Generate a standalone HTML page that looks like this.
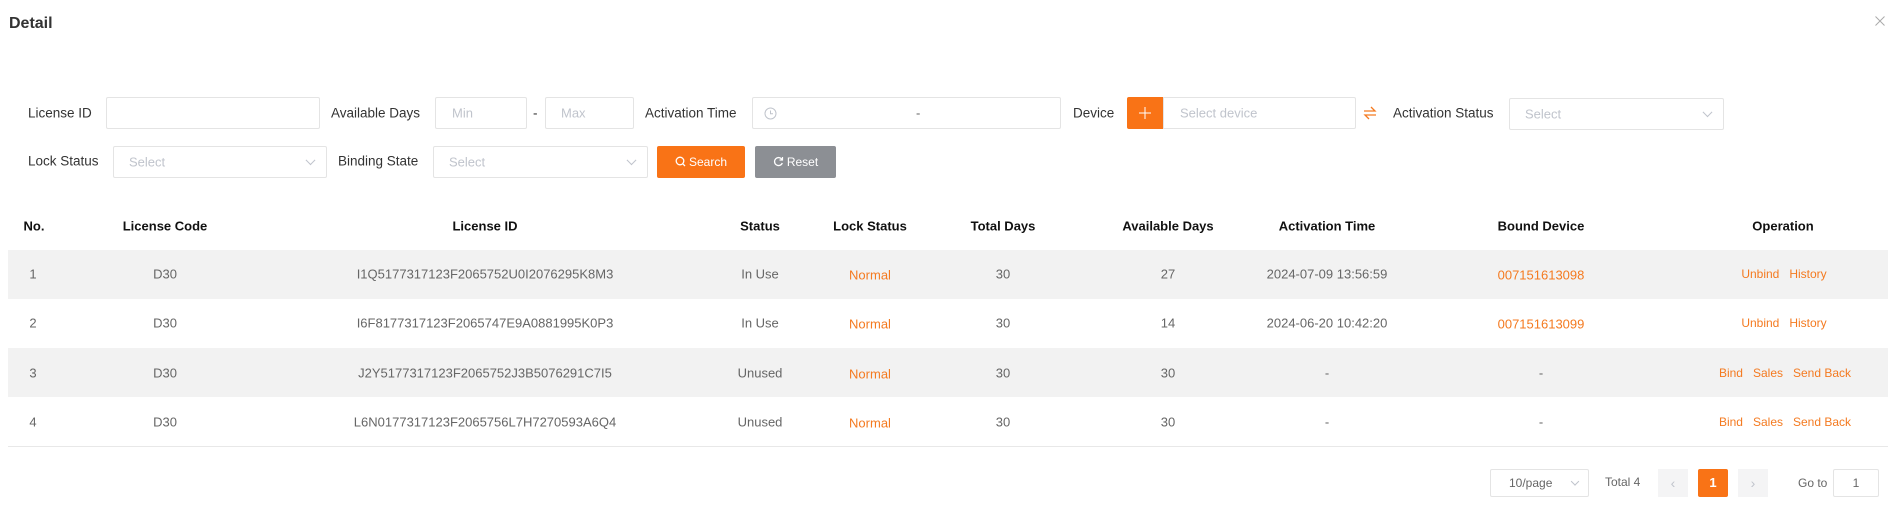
<!DOCTYPE html>
<html><head><meta charset="utf-8"><style>
*{box-sizing:border-box;margin:0;padding:0}
body{width:1902px;height:525px;background:#fff;font-family:"Liberation Sans",Arial,sans-serif;position:relative;overflow:hidden;color:#333}
.a{position:absolute;white-space:nowrap}
.lbl{font-size:13.5px;color:#333;transform:translateY(-50%)}
.box{position:absolute;border:1px solid #e4e4e4;background:#fff;border-radius:2px}
.ph{position:absolute;font-size:13px;color:#c0c4cc;top:50%;transform:translateY(-50%)}
.chev{position:absolute;right:12px;top:50%;width:7px;height:7px;border-right:1px solid #c0c4cc;border-bottom:1px solid #c0c4cc;transform:translateY(-75%) rotate(45deg)}
.c{position:absolute;transform:translate(-50%,-50%);white-space:nowrap}
.h{font-size:13px;font-weight:bold;color:#111}
.t{font-size:13px;color:#666}
.o{color:#f47a20}
.op{font-size:12px;color:#f47a20}
.row{position:absolute;left:8px;width:1880px;height:49px}
</style></head><body>
<div class="a" style="left:9px;top:15px;font-size:16px;font-weight:bold;color:#333">Detail</div>
<svg class="a" style="left:1875px;top:16px" width="10" height="10" viewBox="0 0 10 10"><path d="M0.5 0.5L9.5 9.5M9.5 0.5L0.5 9.5" stroke="#aaa" stroke-width="1"/></svg>

<!-- row 1 -->
<div class="a lbl" style="left:28px;top:113px">License ID</div>
<div class="box" style="left:106px;top:97px;width:214px;height:32px"></div>
<div class="a lbl" style="left:331px;top:113px">Available Days</div>
<div class="box" style="left:435px;top:97px;width:92px;height:32px"><span class="ph" style="left:16px">Min</span></div>
<div class="a lbl" style="left:533px;top:113px">-</div>
<div class="box" style="left:545px;top:97px;width:89px;height:32px"><span class="ph" style="left:15px">Max</span></div>
<div class="a lbl" style="left:645px;top:113px">Activation Time</div>
<div class="box" style="left:752px;top:97px;width:309px;height:32px">
<svg style="position:absolute;left:11px;top:9px" width="13" height="13" viewBox="0 0 13 13"><circle cx="6.5" cy="6.5" r="5.5" fill="none" stroke="#c0c4cc"/><path d="M6.5 3.5V6.8H9" fill="none" stroke="#c0c4cc"/></svg>
<span class="ph" style="left:163px;color:#666">-</span></div>
<div class="a lbl" style="left:1073px;top:113px">Device</div>
<div class="a" style="left:1127px;top:97px;width:36px;height:32px;background:#f97316;border-radius:2px 0 0 2px"><svg style="position:absolute;left:12px;top:10px" width="12" height="12" viewBox="0 0 12 12"><path d="M6 0V12M0 6H12" stroke="#fff" stroke-width="1"/></svg></div>
<div class="box" style="left:1163px;top:97px;width:193px;height:32px;border-radius:0 2px 2px 0"><span class="ph" style="left:16px">Select device</span></div>
<svg class="a" style="left:1363px;top:105px" width="14" height="16" viewBox="0 0 14 16"><path d="M1 6H12L8 2M13 10H2L6 14" fill="none" stroke="#f47a20" stroke-width="1.3"/></svg>
<div class="a lbl" style="left:1393px;top:113px">Activation Status</div>
<div class="box" style="left:1509px;top:98px;width:215px;height:32px"><span class="ph" style="left:15px">Select</span><span class="chev"></span></div>

<!-- row 2 -->
<div class="a lbl" style="left:28px;top:161px">Lock Status</div>
<div class="box" style="left:113px;top:146px;width:214px;height:32px"><span class="ph" style="left:15px">Select</span><span class="chev"></span></div>
<div class="a lbl" style="left:338px;top:161px">Binding State</div>
<div class="box" style="left:433px;top:146px;width:215px;height:32px"><span class="ph" style="left:15px">Select</span><span class="chev"></span></div>
<div class="a" style="left:657px;top:146px;width:88px;height:32px;background:#f97316;border-radius:2px;color:#fff;font-size:12px;line-height:32px;text-align:center">
<svg width="11" height="11" viewBox="0 0 11 11" style="vertical-align:-1px;margin-right:3px"><circle cx="5" cy="5" r="3.8" fill="none" stroke="#fff" stroke-width="1.3"/><path d="M7.8 7.8L10 10" stroke="#fff" stroke-width="1.3"/></svg>Search</div>
<div class="a" style="left:755px;top:146px;width:81px;height:32px;background:#8c8f94;border-radius:2px;color:#fff;font-size:12px;line-height:32px;text-align:center">
<svg width="11" height="11" viewBox="0 0 11 11" style="vertical-align:-1px;margin-right:3px"><path d="M9 3.5A4 4 0 1 0 9.3 7" fill="none" stroke="#fff" stroke-width="1.3"/><path d="M9.5 1V4H6.5" fill="none" stroke="#fff" stroke-width="1.2"/></svg>Reset</div>

<!-- table -->
<div class="row" style="top:250px;background:#f2f2f2"></div>
<div class="row" style="top:348px;background:#f2f2f2"></div>
<div class="a" style="left:8px;top:446px;width:1880px;height:1px;background:#e8e8e8"></div>

<div class="c h" style="left:34px;top:226px">No.</div>
<div class="c h" style="left:165px;top:226px">License Code</div>
<div class="c h" style="left:485px;top:226px">License ID</div>
<div class="c h" style="left:760px;top:226px">Status</div>
<div class="c h" style="left:870px;top:226px">Lock Status</div>
<div class="c h" style="left:1003px;top:226px">Total Days</div>
<div class="c h" style="left:1168px;top:226px">Available Days</div>
<div class="c h" style="left:1327px;top:226px">Activation Time</div>
<div class="c h" style="left:1541px;top:226px">Bound Device</div>
<div class="c h" style="left:1783px;top:226px">Operation</div>

<div class="c t" style="left:33px;top:274px">1</div>
<div class="c t" style="left:165px;top:274px">D30</div>
<div class="c t" style="left:485px;top:274px">I1Q5177317123F2065752U0I2076295K8M3</div>
<div class="c t" style="left:760px;top:274px">In Use</div>
<div class="c t o" style="left:870px;top:275px">Normal</div>
<div class="c t" style="left:1003px;top:274px">30</div>
<div class="c t" style="left:1168px;top:274px">27</div>
<div class="c t" style="left:1327px;top:274px">2024-07-09 13:56:59</div>
<div class="c t o" style="left:1541px;top:275px">007151613098</div>
<div class="c op" style="left:1784px;top:274px">Unbind&nbsp;&nbsp;&nbsp;History</div>

<div class="c t" style="left:33px;top:323px">2</div>
<div class="c t" style="left:165px;top:323px">D30</div>
<div class="c t" style="left:485px;top:323px">I6F8177317123F2065747E9A0881995K0P3</div>
<div class="c t" style="left:760px;top:323px">In Use</div>
<div class="c t o" style="left:870px;top:324px">Normal</div>
<div class="c t" style="left:1003px;top:323px">30</div>
<div class="c t" style="left:1168px;top:323px">14</div>
<div class="c t" style="left:1327px;top:323px">2024-06-20 10:42:20</div>
<div class="c t o" style="left:1541px;top:324px">007151613099</div>
<div class="c op" style="left:1784px;top:323px">Unbind&nbsp;&nbsp;&nbsp;History</div>

<div class="c t" style="left:33px;top:373px">3</div>
<div class="c t" style="left:165px;top:373px">D30</div>
<div class="c t" style="left:485px;top:373px">J2Y5177317123F2065752J3B5076291C7I5</div>
<div class="c t" style="left:760px;top:373px">Unused</div>
<div class="c t o" style="left:870px;top:374px">Normal</div>
<div class="c t" style="left:1003px;top:373px">30</div>
<div class="c t" style="left:1168px;top:373px">30</div>
<div class="c t" style="left:1327px;top:373px">-</div>
<div class="c t" style="left:1541px;top:373px">-</div>
<div class="c op" style="left:1785px;top:373px">Bind&nbsp;&nbsp;&nbsp;Sales&nbsp;&nbsp;&nbsp;Send Back</div>

<div class="c t" style="left:33px;top:422px">4</div>
<div class="c t" style="left:165px;top:422px">D30</div>
<div class="c t" style="left:485px;top:422px">L6N0177317123F2065756L7H7270593A6Q4</div>
<div class="c t" style="left:760px;top:422px">Unused</div>
<div class="c t o" style="left:870px;top:423px">Normal</div>
<div class="c t" style="left:1003px;top:422px">30</div>
<div class="c t" style="left:1168px;top:422px">30</div>
<div class="c t" style="left:1327px;top:422px">-</div>
<div class="c t" style="left:1541px;top:422px">-</div>
<div class="c op" style="left:1785px;top:422px">Bind&nbsp;&nbsp;&nbsp;Sales&nbsp;&nbsp;&nbsp;Send Back</div>

<!-- pagination -->
<div class="box" style="left:1490px;top:469px;width:99px;height:28px"><span class="ph" style="left:18px;color:#666;font-size:12px">10/page</span><span class="chev" style="right:10px;width:6px;height:6px"></span></div>
<div class="a" style="left:1605px;top:475px;font-size:12px;color:#666">Total 4</div>
<div class="a" style="left:1658px;top:469px;width:30px;height:28px;background:#f4f4f5;color:#c0c4cc;font-size:14px;line-height:28px;text-align:center">‹</div>
<div class="a" style="left:1698px;top:469px;width:30px;height:28px;background:#f97316;border-radius:2px;color:#fff;font-size:13px;font-weight:bold;line-height:28px;text-align:center">1</div>
<div class="a" style="left:1738px;top:469px;width:30px;height:28px;background:#f4f4f5;color:#c0c4cc;font-size:14px;line-height:28px;text-align:center">›</div>
<div class="a" style="left:1798px;top:476px;font-size:12px;color:#666">Go to</div>
<div class="box" style="left:1833px;top:469px;width:46px;height:28px;font-size:12px;color:#666;line-height:26px;text-align:center">1</div>
</body></html>
